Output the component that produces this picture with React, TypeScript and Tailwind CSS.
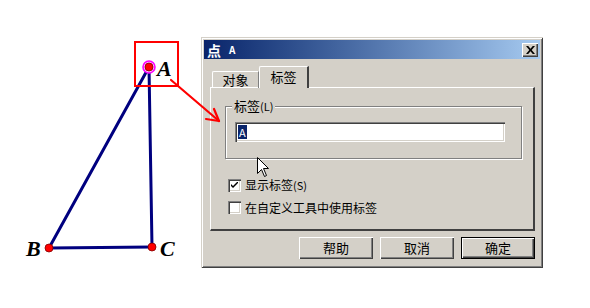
import React from 'react'

const font = { fontFamily: '"Noto Sans CJK SC", "Noto Sans", sans-serif' }

const Canvas = () => (
  <svg className="absolute left-0 top-0" width="590" height="308" viewBox="0 0 590 308">
    {/* triangle */}
    <g stroke="#00007f" strokeWidth="3" strokeLinecap="round">
      <line x1="149" y1="67" x2="49" y2="248" />
      <line x1="149" y1="67" x2="152" y2="247" />
      <line x1="49" y1="248" x2="152" y2="247" />
    </g>
    {/* selection highlight */}
    <rect x="135" y="42" width="43" height="44" fill="none" stroke="#ff0000" strokeWidth="2" />
    <circle cx="149" cy="67" r="6" fill="#ffb4ff" stroke="#ff00ff" strokeWidth="1.6" />
    <circle cx="149" cy="67" r="4" fill="#ff0000" stroke="#800000" strokeWidth="0.8" />
    <circle cx="49" cy="248" r="4" fill="#ff0000" stroke="#800000" strokeWidth="0.8" />
    <circle cx="152" cy="247" r="4" fill="#ff0000" stroke="#800000" strokeWidth="0.8" />
    {/* labels */}
    <g fontFamily='"Liberation Serif", serif' fontStyle="italic" fontWeight="bold" fontSize="22" fill="#000">
      <text x="157" y="76">A</text>
      <text x="26" y="256">B</text>
      <text x="160" y="256">C</text>
    </g>
  </svg>
)

// arrow sits over the dialog, so it is drawn after it
const Arrow = () => (
  <svg className="absolute left-0 top-0 pointer-events-none" width="590" height="308" viewBox="0 0 590 308">
    <g stroke="#ff0000" strokeWidth="2.2" strokeLinecap="round" fill="none">
      <line x1="171" y1="80" x2="219" y2="121" />
      <line x1="219" y1="121" x2="206" y2="119" />
      <line x1="219" y1="121" x2="214" y2="109" />
    </g>
  </svg>
)

const Cursor = () => (
  <svg className="absolute left-[257px] top-[157px]" width="13" height="21" viewBox="0 0 13 21">
    <path d="M0.5 0.5 L0.5 16.5 L4.5 12.5 L7.5 19.5 L9.5 18.5 L6.5 11.5 L11.5 11.5 Z" fill="#fff" stroke="#000" strokeWidth="1" />
  </svg>
)

const Button = ({ label, isDefault }: { label: string; isDefault?: boolean }) => (
  <div
    className={`w-[74px] h-[22px] flex items-center justify-center text-[13px] text-black bg-[#d4d0c8] ${
      isDefault
        ? 'border border-black shadow-[inset_1px_1px_#fff,inset_-1px_-1px_#404040,inset_-2px_-2px_#808080]'
        : 'shadow-[inset_1px_1px_#fff,inset_-1px_-1px_#404040,inset_-2px_-2px_#808080]'
    }`}
  >
    {label}
  </div>
)

const Checkbox = ({ checked }: { checked?: boolean }) => (
  <div className="w-[13px] h-[13px] bg-white flex items-center justify-center shadow-[inset_1px_1px_#808080,inset_2px_2px_#404040,inset_-1px_-1px_#fff,inset_-2px_-2px_#d4d0c8]">
    {checked && (
      <svg width="7" height="7" viewBox="0 0 7 7">
        <path d="M0 2 L0 4 L2 6 L7 1 L7 -1 L2 4 Z" fill="#000" />
      </svg>
    )}
  </div>
)

export default function App() {
  return (
    <div className="relative w-[590px] h-[308px] bg-white overflow-hidden" style={font}>
      <Canvas />

      {/* Dialog window */}
      <div className="absolute left-[201px] top-[37px] w-[342px] h-[231px] bg-[#d4d0c8] p-[3px] flex flex-col shadow-[inset_1px_1px_#d4d0c8,inset_-1px_-1px_#404040,inset_2px_2px_#fff,inset_-2px_-2px_#808080]">
        {/* Title bar */}
        <div className="h-[19px] flex items-center justify-between pl-[3px] pr-[2px] bg-gradient-to-r from-[#0a246a] to-[#a6caf0]">
          <div className="flex items-center gap-[8px] text-white font-bold">
            <span className="text-[14px] leading-none">点</span>
            <span className="text-[10px] leading-none">A</span>
          </div>
          <div className="w-[16px] h-[14px] bg-[#d4d0c8] flex items-center justify-center shadow-[inset_1px_1px_#fff,inset_-1px_-1px_#404040,inset_-2px_-2px_#808080]">
            <svg width="9" height="8" viewBox="0 0 9 8">
              <path d="M0 0 L2.2 0 L4.5 2.8 L6.8 0 L9 0 L5.7 4 L9 8 L6.8 8 L4.5 5.2 L2.2 8 L0 8 L3.3 4 Z" fill="#000" />
            </svg>
          </div>
        </div>

        {/* Body */}
        <div className="flex-1 flex flex-col pl-[6px] pr-[5px] pt-[8px]">
          {/* Tabs */}
          <div className="flex items-end pl-[2px] h-[21px] relative z-10 -mb-px">
            <div className="w-[47px] h-[17px] flex items-center justify-center text-[13px] text-black border-t border-l border-white border-r border-r-[#808080] rounded-tl-[2px]">
              对象
            </div>
            <div className="w-[50px] h-[22px] flex items-center justify-center text-[13px] text-black bg-[#d4d0c8] border-t border-l border-white border-r-2 border-r-[#404040] rounded-tl-[2px] pb-[2px]">
              标签
            </div>
          </div>

          {/* Tab panel */}
          <div className="h-[144px] flex flex-col border-t border-l border-white border-r-2 border-b-2 border-r-[#404040] border-b-[#404040]">
            {/* Group box */}
            <div className="relative mt-[18px] ml-[14px] mr-[11px] h-[53px] border border-[#808080] shadow-[inset_1px_1px_#fff,1px_1px_#fff]">
              <span className="absolute left-[6px] -top-[9px] px-[2px] bg-[#d4d0c8] text-[13px] leading-[16px] text-black">
                标签<span className="text-[11px]">(L)</span>
              </span>
              <div className="mt-[15px] ml-[9px] w-[270px] h-[20px] bg-white flex items-center pl-[3px] shadow-[inset_1px_1px_#808080,inset_2px_2px_#404040,inset_-1px_-1px_#fff,inset_-2px_-2px_#d4d0c8]">
                <span className="bg-[#0a246a] text-white text-[11px] leading-[14px] px-px">A</span>
              </div>
            </div>

            {/* Options */}
            <div className="flex flex-col gap-[9px] mt-[19px] ml-[17px]">
              <div className="flex items-center gap-[4px]">
                <Checkbox checked />
                <span className="text-[12px] leading-[13px] text-black">
                  显示标签<span className="text-[11px]">(S)</span>
                </span>
              </div>
              <div className="flex items-center gap-[4px]">
                <Checkbox />
                <span className="text-[12px] leading-[13px] text-black">在自定义工具中使用标签</span>
              </div>
            </div>
          </div>

          {/* Buttons */}
          <div className="flex justify-end gap-[7px] mt-[6px]">
            <Button label="帮助" />
            <Button label="取消" />
            <Button label="确定" isDefault />
          </div>
        </div>
      </div>

      <Arrow />
      <Cursor />
    </div>
  )
}
